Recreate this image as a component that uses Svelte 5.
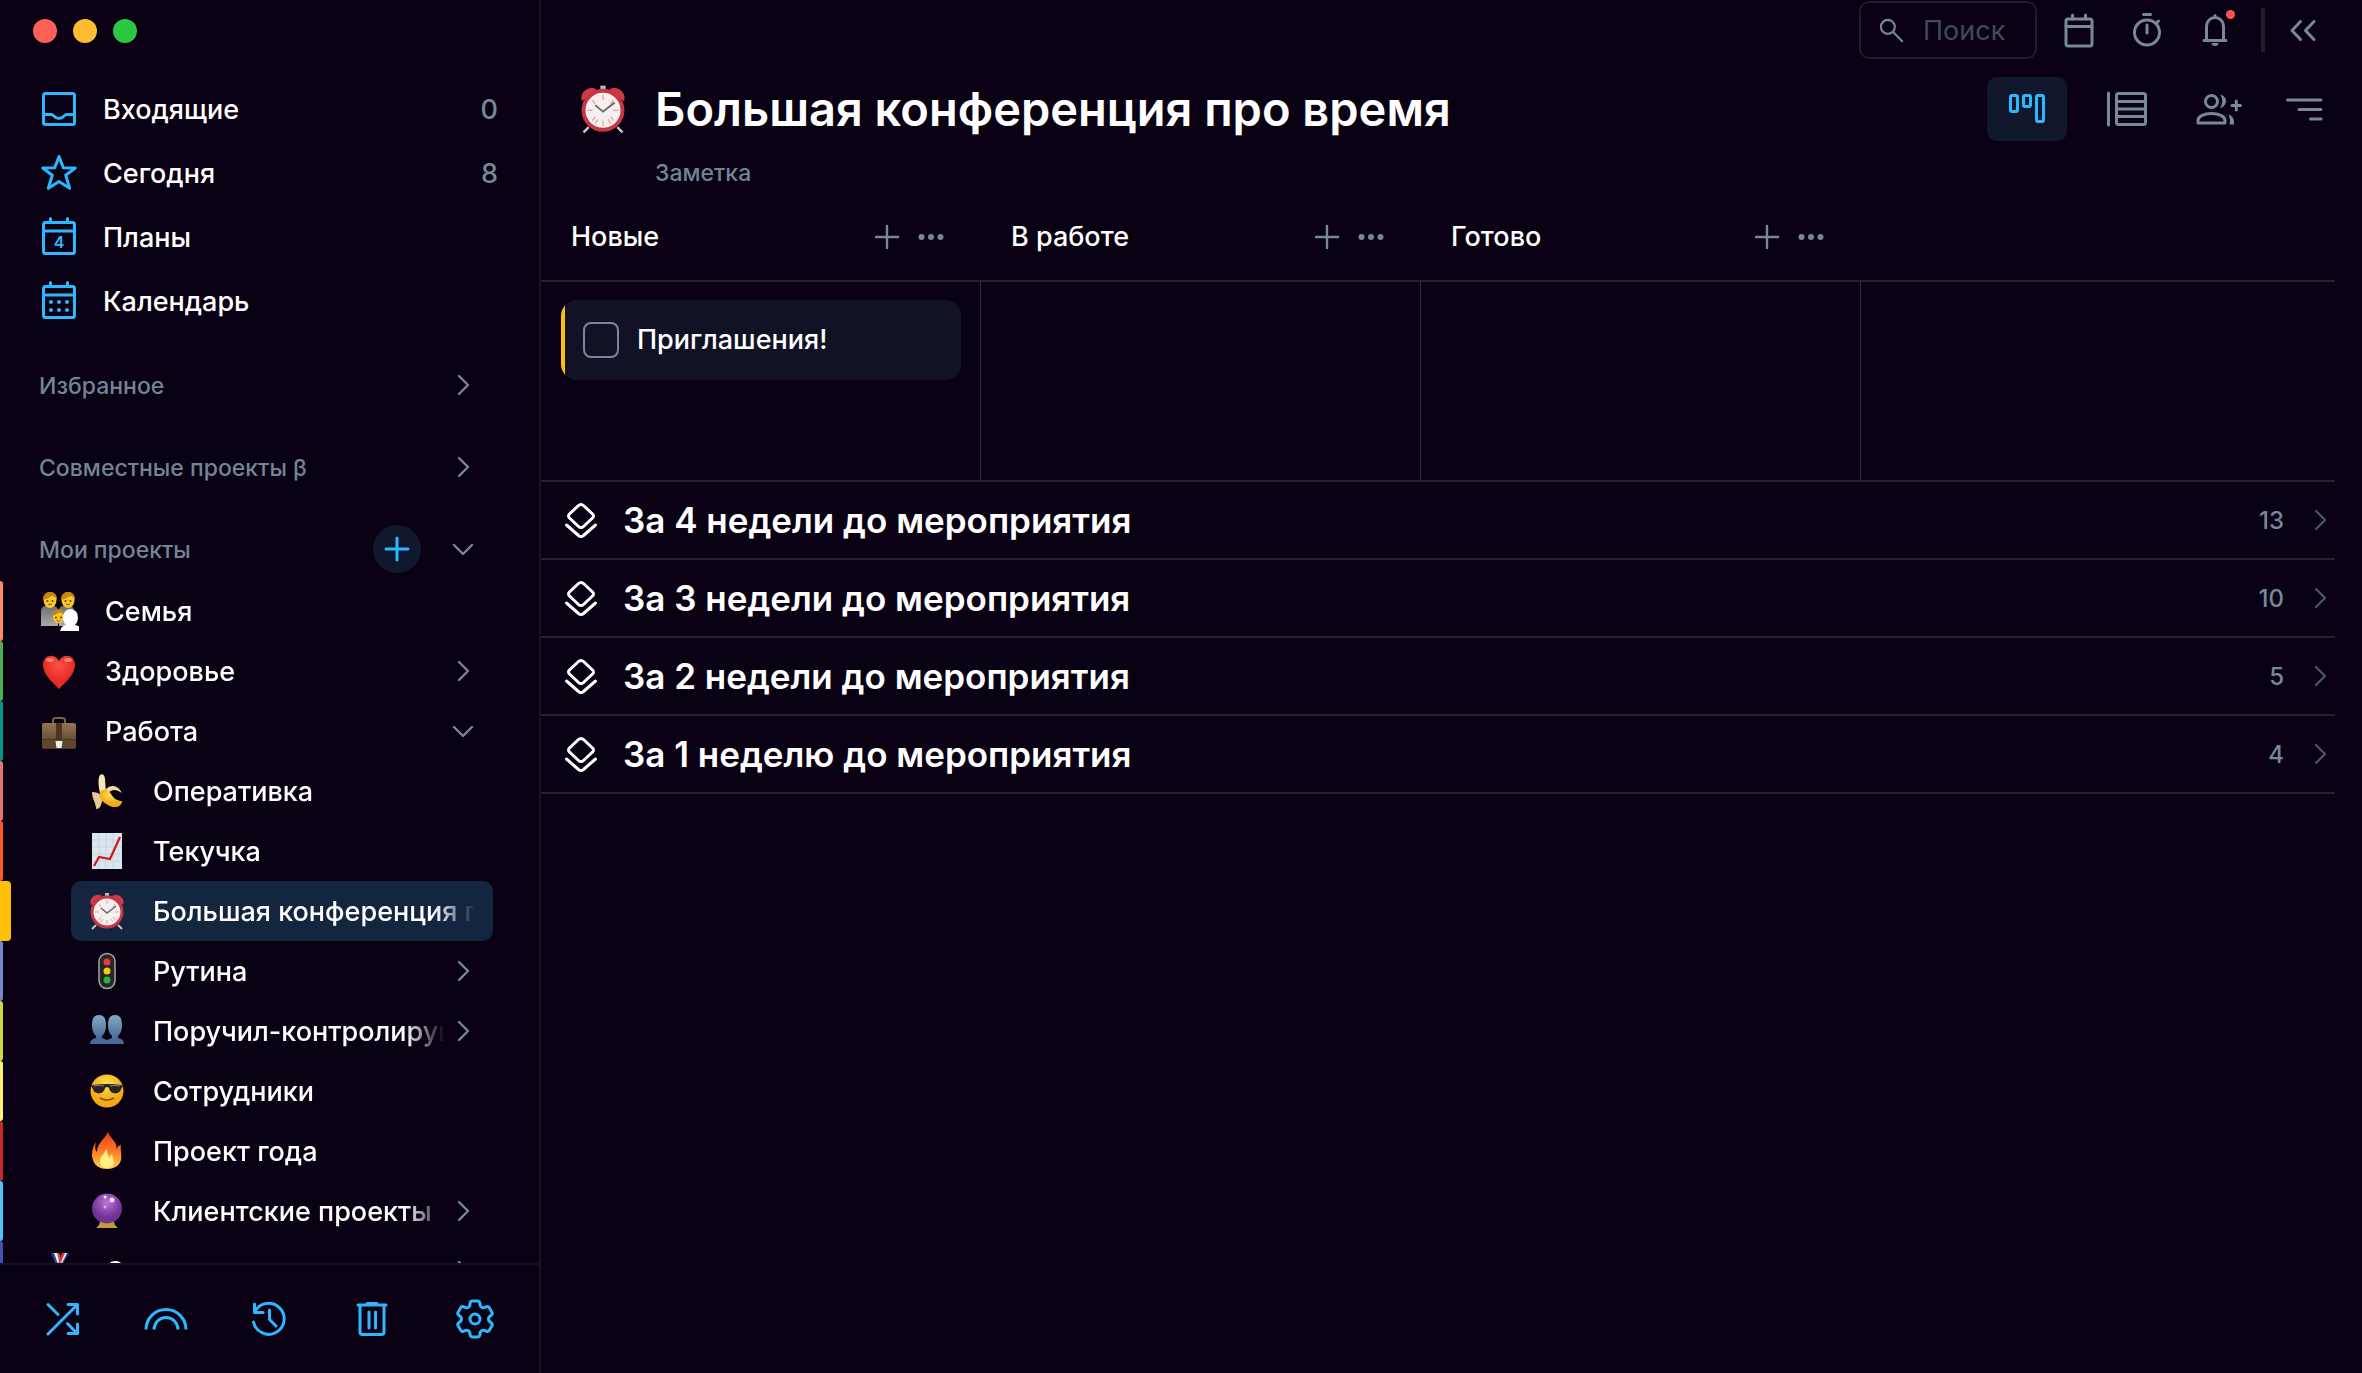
<script>
  let search = $state("");
  let taskDone = $state(false);
  let view = $state("board");

  const navItems = [
    { icon: "inbox", label: "Входящие", count: 0 },
    { icon: "star", label: "Сегодня", count: 8 },
    { icon: "plans", label: "Планы" },
    { icon: "calendar", label: "Календарь" },
  ];

  // arrow: "right" = collapsed group, "down" = expanded group
  const projects = [
    { emoji: "family", name: "Семья", color: "#ff8a65" },
    { emoji: "heart", name: "Здоровье", color: "#4caf50", arrow: "right" },
    { emoji: "briefcase", name: "Работа", color: "#009688", arrow: "down" },
    { emoji: "banana", name: "Оперативка", color: "#e57373", child: true },
    { emoji: "chart", name: "Текучка", color: "#ff5722", child: true },
    { emoji: "alarm", name: "Большая конференция про время", color: "#ffc107", child: true, selected: true },
    { emoji: "traffic", name: "Рутина", color: "#7986cb", child: true, arrow: "right" },
    { emoji: "people", name: "Поручил-контролирую", color: "#cddc39", child: true, arrow: "right" },
    { emoji: "cool", name: "Сотрудники", color: "#fff176", child: true },
    { emoji: "fire", name: "Проект года", color: "#c62828", child: true },
    { emoji: "crystal", name: "Клиентские проекты", color: "#4fc3f7", child: true, arrow: "right" },
    { emoji: "medal", name: "Спорт", color: "#3f51b5", arrow: "right" },
  ];

  const tools = [
    { icon: "shuffle", label: "Случайная задача" },
    { icon: "rainbow", label: "Радуга" },
    { icon: "history", label: "История" },
    { icon: "trash", label: "Корзина" },
    { icon: "gear", label: "Настройки" },
  ];

  const columns = ["Новые", "В работе", "Готово"];

  const groups = [
    { name: "За 4 недели до мероприятия", count: 13 },
    { name: "За 3 недели до мероприятия", count: 10 },
    { name: "За 2 недели до мероприятия", count: 5 },
    { name: "За 1 неделю до мероприятия", count: 4 },
  ];
</script>

{#snippet chevron(dir)}
  <svg class="chevron" viewBox="0 0 24 24" aria-hidden="true">
    <path d={dir === "down" ? "M3 8l9 9 9-9" : "M8 3l9 9-9 9"} />
  </svg>
{/snippet}

{#snippet icon(name)}
  <svg class="icon" viewBox="0 0 40 40" aria-hidden="true">
    {#if name === "inbox"}
      <rect x="4.500" y="4.500" width="31" height="31" rx="2" />
      <path d="M5 25.500h7.500c2.500 0 2.500 4 7.500 4s5-4 7.500-4H35" />
    {:else if name === "star"}
      <path d="M20 3.500l4.300 11.300 12 .2-9.600 7.300 4 13L20 28.500 9.300 35.300l4-13L3.700 15l12-.2z" />
    {:else if name === "plans" || name === "calendar"}
      <rect x="4.500" y="5.500" width="31" height="31" rx="2" />
      <path d="M5 14h30M11.500 1.500v4M28.500 1.500v4" />
      {#if name === "plans"}
        <text x="20" y="31" text-anchor="middle">4</text>
      {:else}
        <g class="solid">
          {#each [21, 29] as y}
            {#each [12, 20, 28] as x}
              <circle cx={x} cy={y} r="2" />
            {/each}
          {/each}
        </g>
      {/if}
    {:else if name === "shuffle"}
      <path d="M5 35L34 6M25 5.500h9.500V15M5 5.500l10 10M24.500 24.500l9.500 10M25 34.500h9.500V25" />
    {:else if name === "rainbow"}
      <path stroke-linecap="butt" d="M0 30.500a20 20 0 0 1 40 0M8 30.500a12 12 0 0 1 24 0" />
    {:else if name === "history"}
      <path d="M5.500 13.500A15.500 15.500 0 1 1 4.500 23M5.500 5v8.500H14M20.500 11v9.500l6.500 6.500" />
    {:else if name === "trash"}
      <path d="M6 6h28M15 4.500h10M8 6.500V33a2.500 2.500 0 0 0 2.500 2.500h19A2.500 2.500 0 0 0 32 33V6.500M17 13v16M23.500 13v16" />
    {:else if name === "gear"}
      <g transform="translate(-4 -4) scale(2)" stroke-width="1.500">
        <path d="M9.594 3.940c.09-.542.56-.94 1.110-.94h2.593c.55 0 1.020.398 1.110.94l.213 1.281c.063.374.313.686.645.87.074.04.147.083.22.127.325.196.72.257 1.075.124l1.217-.456a1.125 1.125 0 0 1 1.370.49l1.296 2.247a1.125 1.125 0 0 1-.26 1.431l-1.003.827c-.293.241-.438.613-.43.992a7.723 7.723 0 0 1 0 .255c-.008.378.137.75.43.991l1.004.827c.424.35.534.955.26 1.430l-1.298 2.247a1.125 1.125 0 0 1-1.369.491l-1.217-.456c-.355-.133-.75-.072-1.076.124a6.470 6.470 0 0 1-.22.128c-.331.183-.581.495-.644.869l-.213 1.281c-.09.543-.56.94-1.110.94h-2.594c-.55 0-1.019-.398-1.110-.94l-.213-1.281c-.062-.374-.312-.686-.644-.87a6.520 6.520 0 0 1-.22-.127c-.325-.196-.72-.257-1.076-.124l-1.217.456a1.125 1.125 0 0 1-1.369-.49l-1.297-2.247a1.125 1.125 0 0 1 .26-1.431l1.004-.827c.292-.24.437-.613.43-.991a6.932 6.932 0 0 1 0-.255c.007-.38-.138-.751-.43-.992l-1.004-.827a1.125 1.125 0 0 1-.26-1.430l1.297-2.247a1.125 1.125 0 0 1 1.370-.491l1.216.456c.356.133.751.072 1.076-.124.072-.044.146-.086.22-.128.332-.183.582-.495.644-.869l.214-1.280Z" />
        <circle cx="12" cy="12" r="2.500" />
      </g>
    {:else if name === "search"}
      <circle cx="15.500" cy="15.500" r="10" /><path d="M23 23l13 13" />
    {:else if name === "cal-small"}
      <rect x="7" y="9" width="26" height="27" rx="2" />
      <path d="M7 16.500h26M13.500 5v4M26.500 5v4" />
    {:else if name === "timer"}
      <circle cx="20" cy="22.500" r="12.500" /><path d="M16.500 4.500h7M20 15v8M29.500 13l2-2" />
    {:else if name === "bell"}
      <path d="M9 30.500h22M11.500 30V16a8.500 8.500 0 0 1 17 0V30M20 5.500v2" /><path class="solid" d="M16.500 33h7a3.500 3 0 0 1-7 0z" />
    {:else if name === "collapse"}
      <path d="M17.500 11.500L9 20.500l8.500 9M31 11.500l-8.500 9 8.500 9" />
    {:else if name === "board"}
      <rect x="3.500" y="6.500" width="7" height="16" rx="1.500" />
      <rect x="16.500" y="6.500" width="7" height="11" rx="1.500" />
      <rect x="29.500" y="6.500" width="7" height="26" rx="1.500" />
    {:else if name === "list"}
      <path d="M1.500 4v32M10 12.500h28.500M10 20h28.500M10 27.500h28.500" />
      <rect x="9.500" y="4.500" width="29" height="31" rx="2" />
    {:else if name === "filter"}
      <path d="M4.500 11H38M16 20.500h22M27.500 30H38" />
    {:else if name === "layers"}
      <path d="M17.500 5.500a3.500 3.500 0 0 1 5 0l9 8.500a2.500 2.500 0 0 1 0 4l-9 8.500a3.500 3.500 0 0 1-5 0l-9-8.500a2.500 2.500 0 0 1 0-4zM5.500 25l12 10.500a3.500 3.500 0 0 0 5 0L34.500 25" />
    {:else if name === "plus"}
      <path d="M20 9v22M9 20h22" />
    {:else if name === "dots"}
      <g class="solid"><circle cx="10.500" cy="20" r="3" /><circle cx="20" cy="20" r="3" /><circle cx="29.500" cy="20" r="3" /></g>
    {/if}
  </svg>
{/snippet}

{#snippet emoji(name)}
  <svg class="emoji" viewBox="0 0 40 40" aria-hidden="true">
    {#if name === "family"}
      <path fill="url(#g-grey)" d="M2 35V20q0-5 5-5h7q5 0 5 5v15zM20 35V20q0-5 5-5h5q5 0 5 5v15z" />
      {#each [[11, 9, 7], [29, 9, 7], [19.5, 25.5, 6]] as [x, y, r]}
        <ellipse cx={x} cy={y} rx={r - 0.5} ry={r + 1} fill="#f9c62e" />
        <path fill="#c78512" d="M{x - r} {y}q0-{r + 1} {r}-{r + 1}t{r} {r + 1}q-2-4-5-4-5 3-9 4z" />
        <circle cx={x - 2.5} cy={y + 1} r="1" fill="#5a3a1c" />
        <circle cx={x + 2.5} cy={y + 1} r="1" fill="#5a3a1c" />
        <path d="M{x - 2} {y + 4}q2 1.500 4 0" fill="none" stroke="#a5541c" />
      {/each}
      <path fill="#fff" d="M21 42q0-7 6-8-3-3-3-8 1-8 8-8 7 1 7 9 0 4-3 7 7 1 7 8z" />
    {:else if name === "heart"}
      <path fill="url(#g-red)" d="M20 38C13 31 4 23 4 14 4 3 16 2 20 10c4-8 16-7 16 4 0 9-9 17-16 24z" />
      <ellipse cx="11" cy="9" rx="4" ry="2" fill="#ff9a91" opacity=".7" /><ellipse cx="29" cy="9" rx="4" ry="2" fill="#ff9a91" opacity=".7" />
    {:else if name === "briefcase"}
      <path d="M14 13V9q0-2 3-2h6q3 0 3 2v4" fill="none" stroke="#7b6042" stroke-width="2" />
      <rect x="3" y="12" width="34" height="26" rx="2" fill="url(#g-brown)" />
      <path fill="#4b3421" d="M17 12h6v16h-6zM3 28h34v1.500H3z" /><path fill="#604630" d="M4 29h32v8H4z" />
      <path fill="#eee" d="M16.500 30h7l-1 7h-5z" />
    {:else if name === "banana"}
      <path fill="#f7e5b5" d="M13 22c-2-8-2-15 0-18 2-2 5 0 5 4l1 15z" />
      <path fill="#e7c995" d="M5 21c6 0 11 3 10 9-1 5-2 8-6 8 0-6-4-10-4-17z" />
      <path fill="#f0dca5" d="M19 18c5-5 12-4 16 4-6-4-10-4-14 0z" />
      <path fill="url(#g-gold)" d="M13 21c4-4 8-3 11 2 3 5 7 7 11 7 0 6-8 8-14 4-6-3-10-8-8-13z" />
    {:else if name === "chart"}
      <rect x="5" y="2" width="30" height="36" fill="#d9e6ed" />
      <path d="M12 2v36M19 2v36M26 2v36M5 9h30M5 16h30M5 23h30M5 30h30" stroke="#c8d6de" />
      <path d="M7 35l5-9 11 2L33 6" fill="none" stroke="#d1161d" stroke-width="2.200" />
    {:else if name === "alarm"}
      <path d="M9 34l-4 4M31 34l4 4" stroke="#c8c2c4" stroke-width="2" />
      <path fill="#ce3a49" d="M4 14c-3-6 5-13 11-9zM36 14c3-6-5-13-11-9z" /><path fill="#bbb" d="M18 2h4v4h-4z" />
      <circle cx="20" cy="21" r="15" fill="#f4f0ef" stroke="#c73645" stroke-width="3" />
      <path d="M20 9v4M20 29v4M8 21h4M28 21h4M12 13l2 3M28 13l-2 3M12 29l2-3M28 29l-2-3M14 31l2-3M26 31l-2-3" stroke="#ef9ba5" />
      <path d="M14 17l6 5 9-7" fill="none" stroke="#646669" stroke-width="1.400" />
    {:else if name === "traffic"}
      <rect x="12" y="2.500" width="16" height="35" rx="8" fill="#262626" stroke="#a5a5a5" stroke-width="1.500" />
      <circle cx="20" cy="11" r="3.500" fill="#ed363e" /><circle cx="20" cy="20" r="3.500" fill="#fcc51b" /><circle cx="20" cy="29" r="3.500" fill="#21b53c" />
    {:else if name === "people"}
      <path fill="url(#g-blue)" d="M9 28v-3q-4-4-4-10C5 7 7 4 12 4s7 3 7 11q0 6-4 10v3zM25 28v-3q-4-4-4-10c0-8 2-11 7-11s7 3 7 11q0 6-4 10v3z" />
      <path fill="#466b96" d="M3 33q0-5 6-6h6l5 2 5-2h6q6 1 6 6z" />
    {:else if name === "cool"}
      <circle cx="20" cy="20" r="16.500" fill="url(#g-gold)" />
      <path fill="#242424" d="M6 14q14-2 28 0l2 1-2 3c-1 6-11 6-12-1q-2-2-4 0c-1 7-11 7-12 1l-2-3z" />
      <path d="M7 15q5-1 10 0M23 15q5-1 10 0" stroke="#858585" fill="none" /><path d="M13 27q7 4 14 0" fill="none" stroke="#854b00" stroke-width="1.500" />
    {:else if name === "fire"}
      <path fill="url(#g-fire)" d="M21 1c-3 7-11 11-11 20q-3-2-1-10c-4 6-5 13-3 18 3 12 25 12 28 0 1-6-1-11 0-15q-4 0-5 7C32 10 23 9 21 1z" />
      <path fill="#ffef85" d="M20 17c-2 6-8 9-7 14 1 9 14 7 14 0 0-3-2-5-2-8q-2 1-2 5c-1-4-4-5-3-11z" />
    {:else if name === "crystal"}
      <path fill="#c49b34" d="M13 30h14q0 4 4 7H9q4-3 4-7z" />
      <circle cx="20" cy="17.500" r="15" fill="url(#g-purple)" />
      <circle cx="18" cy="6" r="1.500" fill="#fff" /><circle cx="25" cy="9" r="2.500" fill="#f9dcff" /><circle cx="18" cy="16" r="1.500" fill="#e3a9f2" />
    {:else if name === "medal"}
      <path fill="#1e489d" d="M12 2h5l6 14h-5zM27 2h3l-8 14h-4z" /><path fill="#f5f2f2" d="M15 2h5l3 10-3 4zM24 2h4l-6 12-2-2z" /><path fill="#d83b46" d="M18 2h2l2 8-1 4zM23 2h3l-6 14-1-3z" />
      <circle cx="20" cy="26" r="10" fill="url(#g-gold)" />
    {/if}
  </svg>
{/snippet}

<svg class="defs" width="0" height="0" aria-hidden="true">
  <defs>
    <linearGradient id="g-grey" x1="0" y1="0" x2="0" y2="1"><stop stop-color="#6f6f70" /><stop offset="1" stop-color="#aaa" /></linearGradient>
    <linearGradient id="g-brown" x1="0" y1="0" x2="0" y2="1"><stop stop-color="#947653" /><stop offset="1" stop-color="#4f3826" /></linearGradient>
    <linearGradient id="g-blue" x1="0" y1="0" x2="0" y2="1"><stop stop-color="#85a9c2" /><stop offset="1" stop-color="#476b95" /></linearGradient>
    <linearGradient id="g-fire" x1="0" y1="0" x2="0" y2="1"><stop stop-color="#f03c1e" /><stop offset=".5" stop-color="#fb7924" /><stop offset="1" stop-color="#ffd34a" /></linearGradient>
    <radialGradient id="g-red" cy=".3"><stop stop-color="#ff5246" /><stop offset="1" stop-color="#e32b23" /></radialGradient>
    <radialGradient id="g-gold" cy=".3"><stop stop-color="#ffe14d" /><stop offset="1" stop-color="#f4a917" /></radialGradient>
    <radialGradient id="g-purple" cy=".3"><stop stop-color="#bd72d7" /><stop offset="1" stop-color="#713298" /></radialGradient>
  </defs>
</svg>

<div class="app">
  <aside class="sidebar">
    <div class="window-controls">
      <button class="close" aria-label="Закрыть"></button>
      <button class="minimize" aria-label="Свернуть"></button>
      <button class="maximize" aria-label="Развернуть"></button>
    </div>

    <nav class="nav">
      {#each navItems as item}
        <a class="nav-item" href="#{item.icon}">
          {@render icon(item.icon)}
          <span class="nav-label">{item.label}</span>
          {#if item.count !== undefined}<span class="nav-count">{item.count}</span>{/if}
        </a>
      {/each}
    </nav>

    <div class="sections">
      <button class="section"><span>Избранное</span>{@render chevron("right")}</button>
      <button class="section"><span>Совместные проекты β</span>{@render chevron("right")}</button>
      <div class="section">
        <span>Мои проекты</span>
        <button class="add" aria-label="Добавить проект">{@render icon("plus")}</button>
        <button aria-label="Свернуть проекты">{@render chevron("down")}</button>
      </div>
    </div>

    <ul class="projects">
      {#each projects as p}
        <li class:child={p.child} class:selected={p.selected}>
          <span class="bar" style="background: {p.color}"></span>
          <a class="project" href="#{p.emoji}">
            {@render emoji(p.emoji)}
            <span class="project-name">{p.name}</span>
            {#if p.arrow}{@render chevron(p.arrow)}{/if}
          </a>
        </li>
      {/each}
    </ul>

    <div class="tools">
      {#each tools as tool}
        <button aria-label={tool.label}>{@render icon(tool.icon)}</button>
      {/each}
    </div>
  </aside>

  <main class="main">
    <div class="topbar">
      <label class="search">
        {@render icon("search")}
        <input type="text" placeholder="Поиск" aria-label="Поиск" bind:value={search} />
      </label>
      <div class="top-actions">
        <button aria-label="Календарь">{@render icon("cal-small")}</button>
        <button aria-label="Таймер">{@render icon("timer")}</button>
        <button class="notify" aria-label="Уведомления">{@render icon("bell")}</button>
      </div>
      <span class="divider"></span>
      <button aria-label="Свернуть панель">{@render icon("collapse")}</button>
    </div>

    <header class="header">
      <div class="title-row">
        {@render emoji("alarm")}
        <h1>Большая конференция про время</h1>
        <div class="views">
          <button class="view" class:active={view === "board"} onclick={() => (view = "board")} aria-label="Доска">{@render icon("board")}</button>
          <button class="view-list" onclick={() => (view = "list")} aria-label="Список">{@render icon("list")}</button>
          <button class="view-share" aria-label="Поделиться">
            <svg class="share" viewBox="0 0 46 40" aria-hidden="true">
              <circle cx="15.500" cy="12.500" r="6" />
              <path d="M2 34v-2.500C2 27 8.500 24.500 15.500 24.500S29 27 29 31.500V34zM36 16.500h8.500M40.300 12v9" />
              <path class="solid" d="M24 5.500c4 1 6 4 6 6.500s-2 6.500-6 7c3-4 3-9.500 0-13.500zM32.500 25.500c4 1.500 6 4 5.500 10h-4.500c1-4 .5-6-1-10z" />
            </svg>
          </button>
          <button class="view-filter" aria-label="Сортировка">{@render icon("filter")}</button>
        </div>
      </div>
      <p class="note">Заметка</p>
    </header>

    <section class="board">
      <div class="board-head">
        {#each columns as column}
          <div class="column-head">
            <h2>{column}</h2>
            <button aria-label="Добавить задачу">{@render icon("plus")}</button>
            <button aria-label="Меню колонки">{@render icon("dots")}</button>
          </div>
        {/each}
      </div>
      <div class="board-body">
        {#each columns as column, i}
          <div class="column">
            {#if i === 0}
              <label class="card">
                <input type="checkbox" bind:checked={taskDone} />
                <span>Приглашения!</span>
              </label>
            {/if}
          </div>
        {/each}
      </div>
      {#each groups as group}
        <button class="group">
          {@render icon("layers")}
          <span class="group-name">{group.name}</span>
          <span class="group-count">{group.count}</span>
          {@render chevron("right")}
        </button>
      {/each}
    </section>
  </main>
</div>

<style>
  :global(body) {
    margin: 0;
    background: #0a0114;
  }
  .defs { position: absolute; }

  .app {
    display: flex;
    height: 100vh;
    overflow: hidden;
    background: #0a0114;
    color: #fff;
    font-family: Inter, "Noto Sans", sans-serif;
    font-size: 27px;
    font-weight: 500;
    line-height: 36px;
  }
  button {
    display: flex;
    align-items: center;
    justify-content: center;
    padding: 0;
    border: none;
    background: none;
    color: #778899;
    font: inherit;
    cursor: pointer;
  }
  a { color: inherit; text-decoration: none; }
  h1, h2, p, ul { margin: 0; padding: 0; }

  .icon, .chevron, .share {
    flex-shrink: 0;
    fill: none;
    stroke: currentColor;
    stroke-width: 3;
    stroke-linecap: round;
    stroke-linejoin: round;
  }
  .icon, .emoji { width: 40px; height: 40px; }
  .emoji { flex-shrink: 0; }
  .chevron { width: 24px; height: 24px; color: #778899; stroke-width: 2.4; }
  .solid { fill: currentColor; stroke: none; }
  .icon text {
    fill: currentColor;
    stroke: none;
    font-size: 16px;
    font-weight: 600;
  }

  /* Sidebar */
  .sidebar {
    display: flex;
    flex-direction: column;
    flex-shrink: 0;
    width: 541px;
    box-sizing: border-box;
    border-right: 2px solid #15131f;
  }
  .window-controls {
    display: flex;
    gap: 16px;
    padding: 19px 33px 34px;
  }
  .window-controls button {
    width: 24px;
    height: 24px;
    border-radius: 50%;
  }
  .close { background: #ff5f57; }
  .minimize { background: #febc2e; }
  .maximize { background: #28c840; }

  .nav-item {
    display: flex;
    align-items: center;
    gap: 24px;
    height: 64px;
    padding: 0 41px 0 39px;
  }
  .nav-item .icon { color: #2bb8ff; }
  .nav-label { flex: 1; }
  .nav-count { color: #778899; }
  .nav-label, .nav-count, .project-name { padding-top: 2px; }

  .sections {
    display: flex;
    flex-direction: column;
    gap: 34px;
    padding: 28px 64px 8px 39px;
  }
  .section {
    display: flex;
    align-items: center;
    gap: 30px;
    height: 48px;
    color: #728595;
    font-size: 23px;
  }
  .section span {
    flex: 1;
    padding-top: 2px;
    text-align: left;
  }
  .add {
    width: 48px;
    height: 48px;
    border-radius: 50%;
    background: #11182e;
    color: #2bb8ff;
  }

  .projects {
    flex: 1;
    min-height: 0;
    overflow: hidden;
    list-style: none;
  }
  .projects li {
    display: grid;
    grid-template-columns: 39px 1fr;
    height: 60px;
  }
  .projects li.child { grid-template-columns: 71px 1fr; }
  .bar {
    width: 3px;
    border-radius: 0 4px 4px 0;
  }
  .selected .bar { width: 11px; }
  .project {
    display: flex;
    align-items: center;
    min-width: 0;
    margin-right: 46px;
    padding-right: 18px;
    border-radius: 10px;
  }
  .child .project { padding-left: 16px; }
  .selected .project { background: #13253f; }
  .project-name {
    flex: 1;
    min-width: 0;
    margin: 0 6px 0 26px;
    overflow: hidden;
    white-space: nowrap;
    mask-image: linear-gradient(to right, #000 calc(100% - 40px), transparent);
  }
  .selected .project-name { margin-right: 0; }

  .tools {
    display: flex;
    align-items: center;
    justify-content: space-between;
    height: 108px;
    padding: 0 44px 0 43px;
    border-top: 2px solid #15131f;
  }
  .tools button { color: #2bb8ff; }
  .tools .icon { overflow: visible; }

  /* Top bar */
  .main {
    flex: 1;
    min-width: 0;
  }
  .topbar {
    display: flex;
    align-items: center;
    justify-content: flex-end;
    height: 60px;
    padding-right: 39px;
  }
  .search {
    display: flex;
    align-items: center;
    gap: 18px;
    box-sizing: border-box;
    width: 178px;
    height: 58px;
    margin-right: 22px;
    padding: 0 16px;
    border: 2px solid #1f1d2b;
    border-radius: 10px;
    color: #778899;
  }
  .search .icon { width: 28px; height: 28px; }
  .search input {
    width: 100%;
    min-width: 0;
    padding: 2px 0 0;
    border: none;
    outline: none;
    background: none;
    color: #fff;
    font: inherit;
    font-weight: 400;
  }
  .search input::placeholder { color: #424a5a; opacity: 1; }
  .top-actions {
    display: flex;
    gap: 28px;
  }
  .notify { position: relative; }
  .notify::after {
    content: "";
    position: absolute;
    top: 0;
    right: 0;
    width: 9px;
    height: 9px;
    border-radius: 50%;
    background: #ff5252;
  }
  .divider {
    width: 4px;
    height: 44px;
    margin: 0 18px 0 26px;
    background: #1f1d2b;
  }

  /* Project header */
  .header { padding: 17px 39px 4px 36px; }
  .title-row {
    display: flex;
    align-items: center;
    height: 64px;
  }
  .title-row .emoji {
    width: 52px;
    height: 52px;
    margin-right: 26px;
  }
  h1 {
    flex: 1;
    font-size: 47px;
    font-weight: 600;
    line-height: 60px;
    white-space: nowrap;
  }
  .views {
    display: flex;
    align-items: center;
    gap: 32px;
  }
  .view {
    width: 80px;
    height: 64px;
    border-radius: 10px;
  }
  .view.active {
    background: #11182e;
    color: #2bb8ff;
  }
  .view-list { width: 56px; }
  .view-share { width: 64px; }
  .share { width: 46px; height: 40px; }
  .note {
    margin: 16px 0 0 78px;
    color: #728595;
    font-size: 23px;
    line-height: 32px;
  }

  /* Board */
  .board { margin-right: 27px; }
  .board-head, .board-body {
    display: grid;
    grid-template-columns: repeat(3, 440px) 1fr;
    border-bottom: 2px solid #23222f;
  }
  .column-head {
    display: flex;
    align-items: center;
    gap: 4px;
    height: 87px;
    padding: 0 30px;
  }
  h2 {
    flex: 1;
    font-size: 27px;
    font-weight: 500;
  }
  .column-head .icon { stroke-width: 2.4; }
  .column {
    box-sizing: border-box;
    min-height: 198px;
    padding: 18px 19px 18px 20px;
    border-right: 1px solid #2a2936;
  }
  .card {
    display: flex;
    align-items: center;
    gap: 18px;
    height: 80px;
    padding-left: 22px;
    border-radius: 16px;
    background: linear-gradient(to right, #ffc107 4px, #121226 4px);
  }
  .card input {
    appearance: none;
    box-sizing: border-box;
    width: 36px;
    height: 36px;
    margin: 0;
    border: 2px solid #778899;
    border-radius: 8px;
  }
  .card input:checked { background: #2bb8ff; }

  .group {
    display: flex;
    width: 100%;
    height: 78px;
    padding: 0 3px 0 20px;
    border-bottom: 2px solid #23222f;
    text-align: left;
  }
  .group .icon { color: #fff; }
  .group-name {
    flex: 1;
    margin-left: 22px;
    color: #fff;
    font-size: 35px;
    font-weight: 600;
  }
  .group-count {
    margin-right: 24px;
    padding-top: 2px;
    font-size: 24px;
  }
  .group .chevron { color: #4a5363; }
</style>
